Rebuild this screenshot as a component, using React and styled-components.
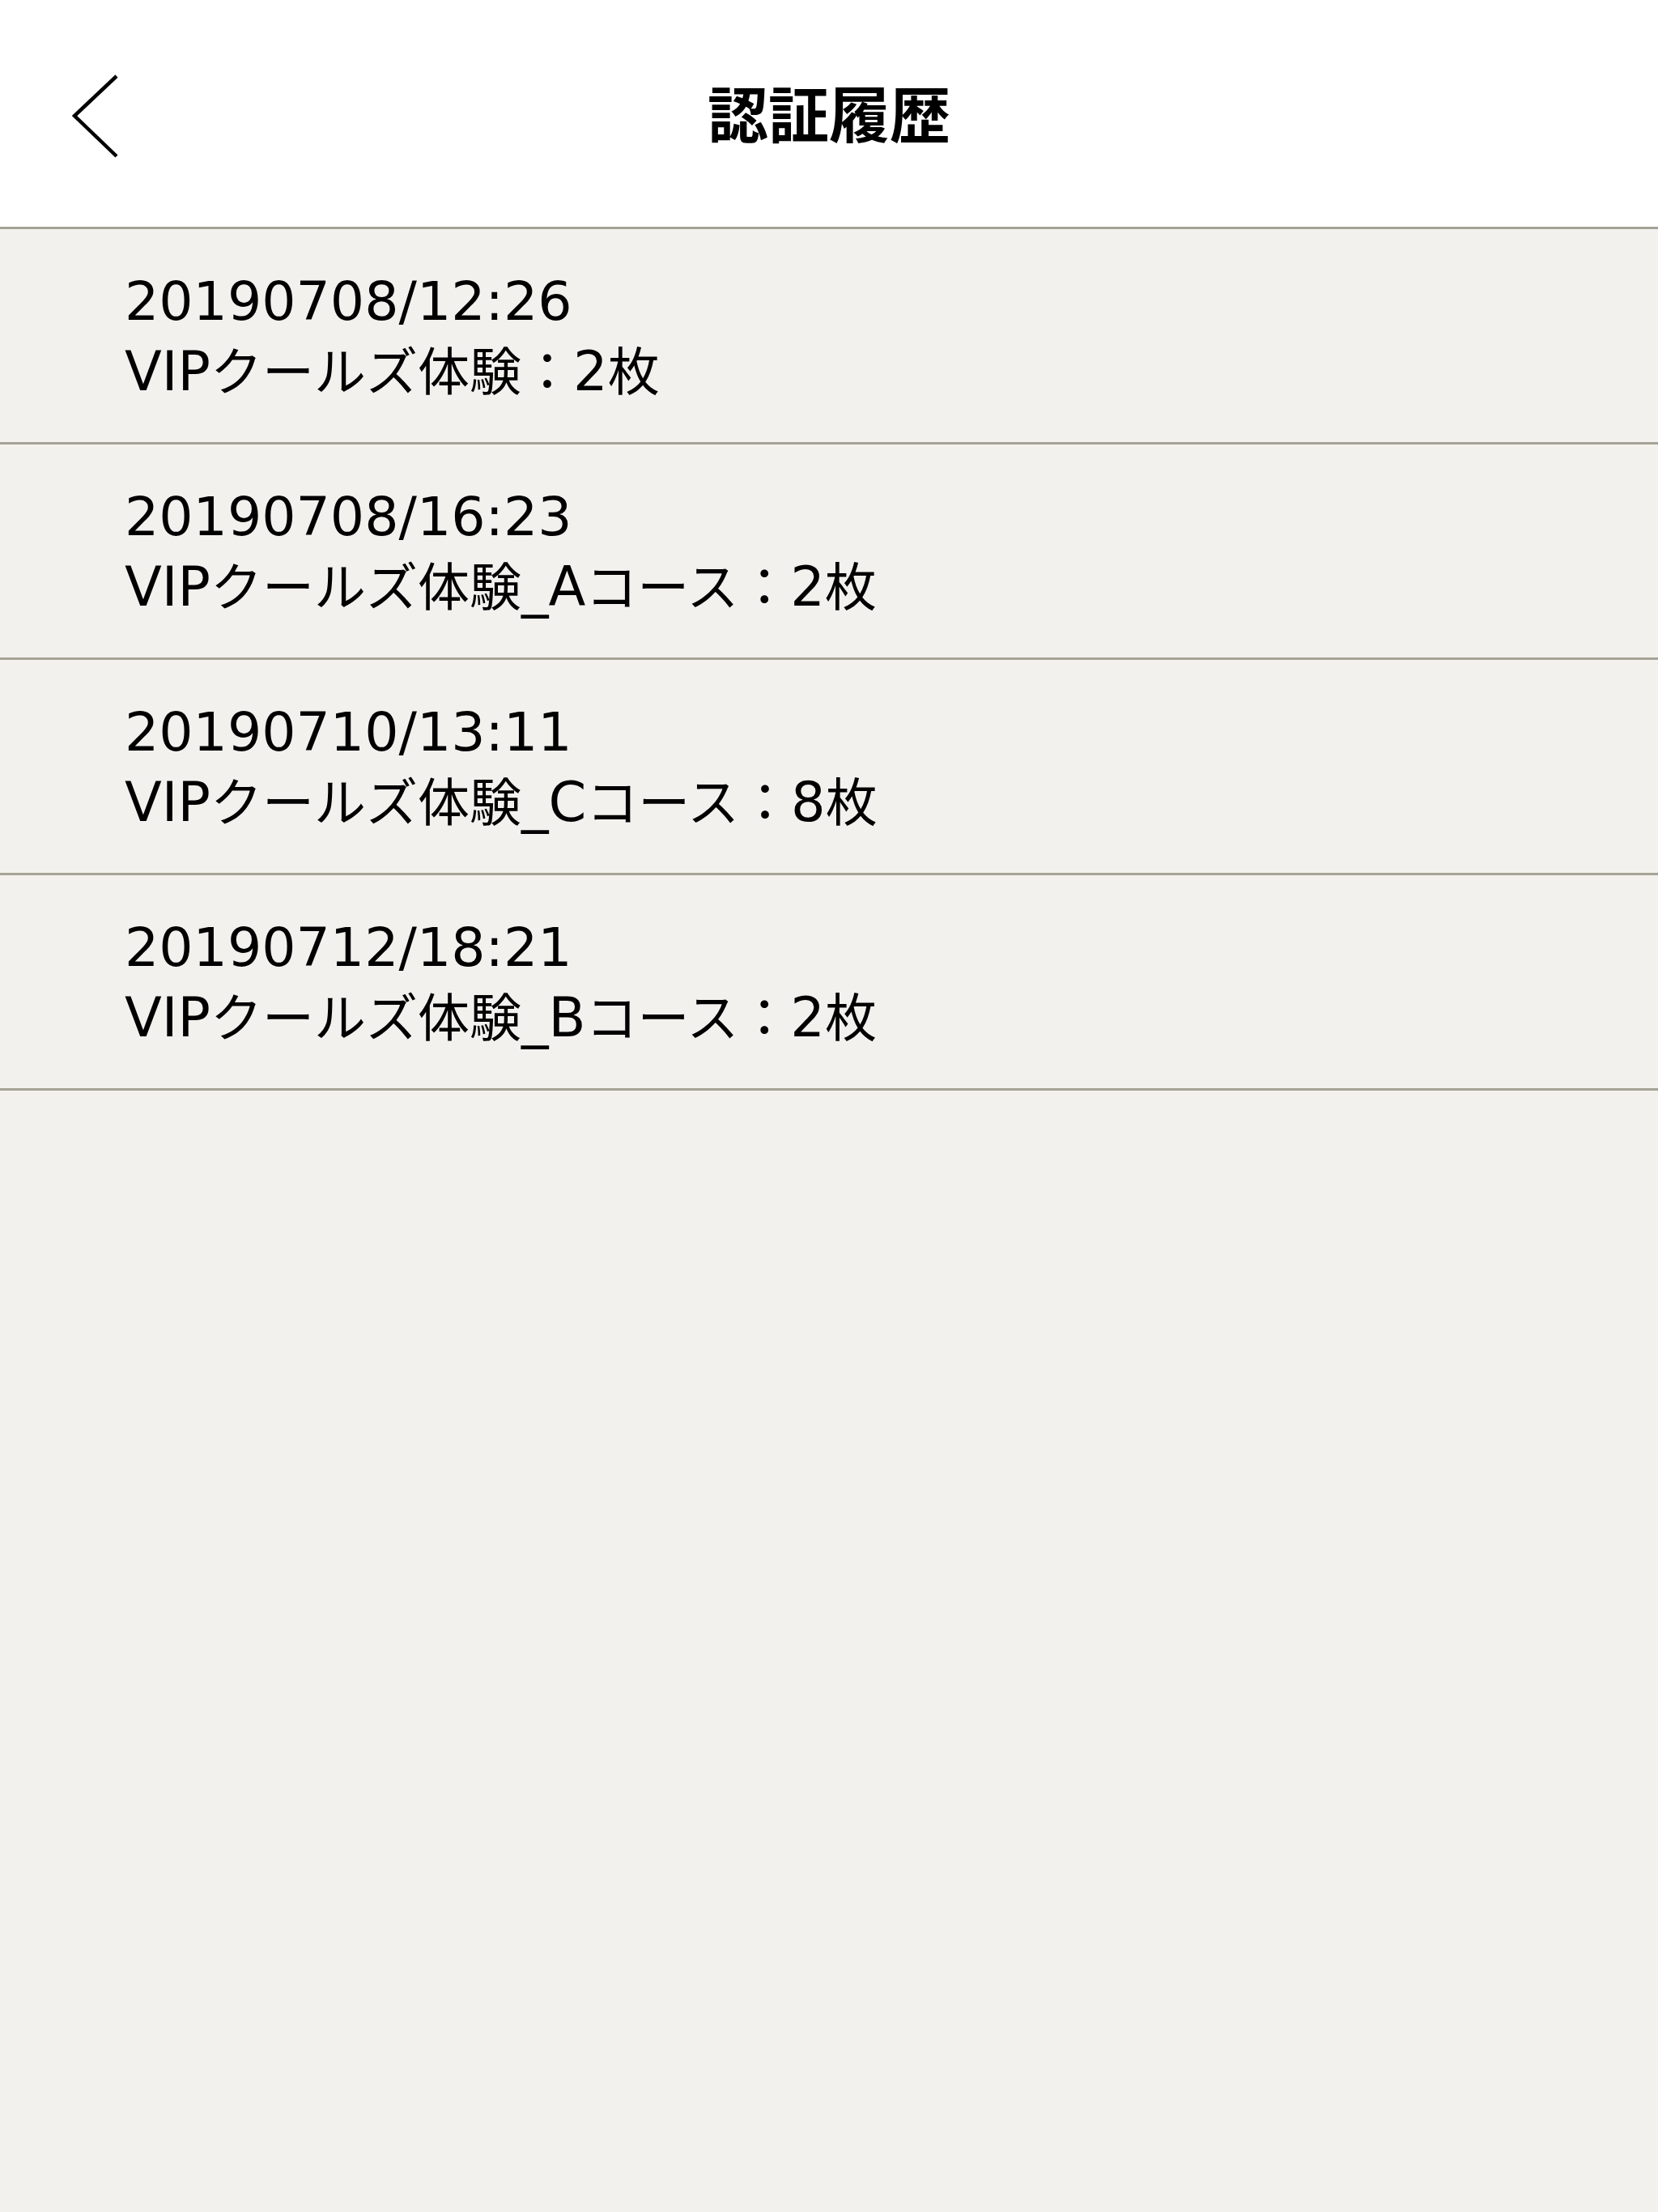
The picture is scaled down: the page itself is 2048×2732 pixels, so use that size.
import React from 'react'
import styled, { createGlobalStyle } from 'styled-components';

const history = [
    { date: '20190708/12:26', label: 'VIPクールズ体験：2枚' },
    { date: '20190708/16:23', label: 'VIPクールズ体験_Aコース：2枚' },
    { date: '20190710/13:11', label: 'VIPクールズ体験_Cコース：8枚' },
    { date: '20190712/18:21', label: 'VIPクールズ体験_Bコース：2枚' },
];

// split a label into latin / japanese runs so each can get its own size
const toRuns = (text) =>
    text.split(/([\u3000-\u9fff\uff00-\uffef]+)/).filter(Boolean).map((part, i) =>
        /[\u3000-\u9fff\uff00-\uffef]/.test(part)
            ? <Jp key={i}>{part}</Jp>
            : <span key={i}>{part}</span>
    );

const App = () => {
    return (
        <Page lang="ja">
            <GlobalStyle />
            <Header>
                <BackBtn aria-label="back">
                    <svg width="60" height="110" viewBox="0 0 60 110">
                        <polyline points="55,3 3,52 55,102" fill="none" stroke="#000" strokeWidth="4.5" />
                    </svg>
                </BackBtn>
                <Title>認証履歴</Title>
            </Header>
            <List>
                {history.map((item) => (
                    <Row key={item.date}>
                        <p className='date'>{item.date}</p>
                        <p className='label'>{toRuns(item.label)}</p>
                    </Row>
                ))}
            </List>
        </Page>
    )
}

const GlobalStyle = createGlobalStyle`
    html, body {
        margin: 0;
        padding: 0;
        background: #f2f1ee;
    }
    #root {
        min-height: 2732px;
    }
`;

const Page = styled.div`
    width: 2048px;
    min-height: 2732px;
    background: #f2f1ee;
    font-family: "DejaVu Sans", "Noto Sans CJK JP", sans-serif;
    color: #000;
`;

const Header = styled.header`
    position: relative;
    height: 280px;
    background: #fff;
    border-bottom: 3px solid #a4a396;
    display: flex;
    align-items: center;
    justify-content: center;
`;

const BackBtn = styled.button`
    position: absolute;
    left: 89px;
    top: 91px;
    width: 60px;
    height: 110px;
    padding: 0;
    border: none;
    background: transparent;
    cursor: pointer;
    svg {
        display: block;
    }
`;

const Title = styled.h1`
    margin: 0;
    margin-top: -6px;
    font-family: "Noto Sans CJK JP", sans-serif;
    font-size: 75px;
    font-weight: 700;
    letter-spacing: 0;
`;

const List = styled.div`
    display: flex;
    flex-direction: column;
`;

const Row = styled.div`
    height: 263px;
    box-sizing: content-box;
    border-bottom: 3px solid #a4a396;
    padding-left: 154px;
    display: flex;
    flex-direction: column;
    justify-content: center;
    p {
        margin: 0;
        font-weight: 400;
        white-space: nowrap;
    }
    .date {
        font-size: 66.5px;
        line-height: 88px;
    }
    .label {
        font-size: 67px;
        line-height: 84px;
        margin-top: -4px;
    }
`;

const Jp = styled.span`
    font-family: "Noto Sans CJK JP", sans-serif;
    font-size: 64px;
`;

export default App
